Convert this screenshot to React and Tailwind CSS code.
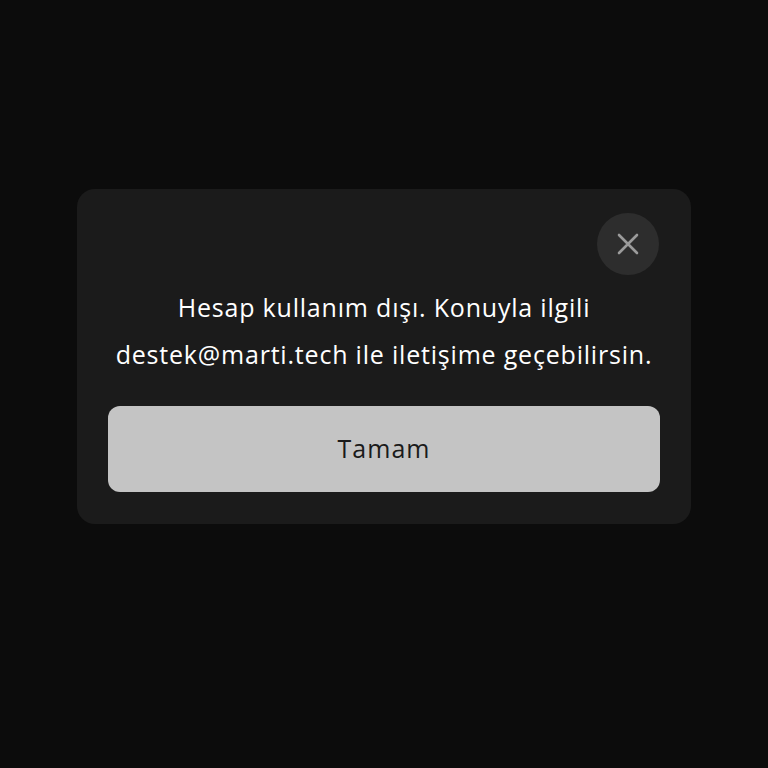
import React from 'react';

const CloseIcon = () => (
  <svg width="24" height="24" viewBox="0 0 24 24" fill="none" stroke="#9b9b9b" strokeWidth="2.6" strokeLinecap="round">
    <path d="M3 3L21 21M21 3L3 21" />
  </svg>
);

export default function App() {
  return (
    <div
      className="w-[768px] h-[768px] bg-[#0c0c0c] flex items-start justify-center pt-[189px]"
      style={{ fontFamily: '"Open Sans", "Noto Sans", sans-serif' }}
    >
      <div className="w-[614px] bg-[#1b1b1b] rounded-[18px] pt-[24px] px-[31px] pb-[32px] flex flex-col">
        <div className="flex justify-end mr-[1px]">
          <button className="w-[62px] h-[62px] rounded-full bg-[#2d2d2d] flex items-center justify-center">
            <CloseIcon />
          </button>
        </div>
        <p className="text-white text-center text-[25px] tracking-[0.8px] leading-[47px] mt-[9px]">
          Hesap kullanım dışı. Konuyla ilgili
          <br />
          destek@marti.tech ile iletişime geçebilirsin.
        </p>
        <button className="mt-[28px] h-[86px] w-full rounded-[12px] bg-[#c4c4c4] text-[#1a1a1a] text-[25px] tracking-[1px]">
          Tamam
        </button>
      </div>
    </div>
  );
}
